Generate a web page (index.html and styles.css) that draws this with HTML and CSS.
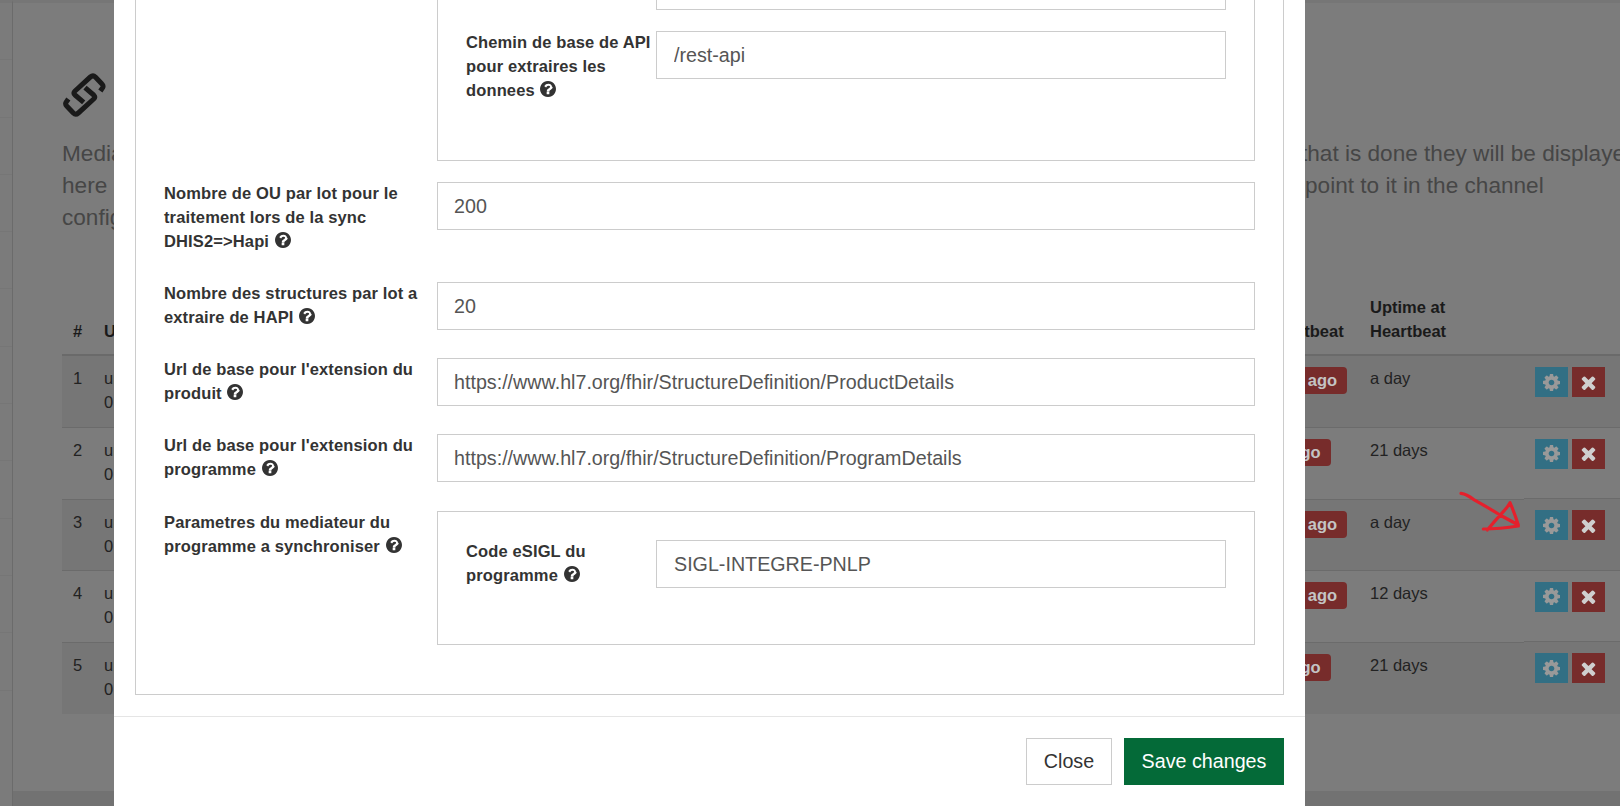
FILE: index.html
```html
<!DOCTYPE html>
<html lang="en">
<head>
<meta charset="utf-8">
<title>Mediators</title>
<link rel="stylesheet" href="styles.css">
</head>
<body>
<svg class="defs" width="0" height="0" aria-hidden="true">
  <symbol id="q" viewBox="128 128 1536 1536"><path d="M1024 1376v-192q0-14-9-23t-23-9h-192q-14 0-23 9t-9 23v192q0 14 9 23t23 9h192q14 0 23-9t9-23zm256-672q0-88-55.5-163t-138.5-116-170-41q-243 0-371 213-15 24 8 42l132 100q7 6 19 6 16 0 25-19 66-85 107-115 42-29 106-29 59 0 105 32t46 72q0 46-24 74t-82 54q-76 34-139.5 104.5t-63.5 151.5v36q0 14 9 23t23 9h192q14 0 23-9t9-23q0-23 26-59.5t66-63.5q39-22 59-34.5t54-41 52-56 33-70.5 15-96zm384 192q0 209-103 385.5t-279.5 279.5-385.5 103-385.5-103-279.5-279.5-103-385.5 103-385.5 279.5-279.5 385.5-103 385.5 103 279.5 279.5 103 385.5z"/></symbol>
  <symbol id="cog" viewBox="128 128 1536 1536"><path d="M1152 896q0-106-75-181t-181-75-181 75-75 181 75 181 181 75 181-75 75-181zm512-109v222q0 12-8 23t-20 13l-185 28q-19 54-39 91 35 50 107 138 10 12 10 25t-9 23q-27 37-99 108t-94 71q-12 0-26-9l-138-108q-44 23-91 38-16 136-29 186-7 28-36 28h-222q-14 0-24.5-8.5t-11.5-21.5l-28-184q-49-16-90-37l-141 107q-10 9-25 9-14 0-25-11-126-114-165-168-7-10-7-23 0-12 8-23 15-21 51-66.5t54-70.5q-27-50-41-99l-183-27q-13-2-21-12.5t-8-23.5v-222q0-12 8-23t19-13l186-28q14-46 39-92-40-57-107-138-10-12-10-24 0-10 9-23 26-36 98.5-107.5t94.5-71.5q13 0 26 10l138 107q44-23 91-38 16-136 29-186 7-28 36-28h222q14 0 24.5 8.5t11.5 21.5l28 184q49 16 90 37l142-107q9-9 24-9 13 0 25 10 129 119 165 170 7 8 7 22 0 12-8 23-15 21-51 66.5t-54 70.5q26 50 41 98l183 28q13 2 21 12.5t8 23.5z"/></symbol>
  <symbol id="x" viewBox="240 240 1312 1312"><path d="M1490 1322q0 40-28 68l-136 136q-28 28-68 28t-68-28l-294-294-294 294q-28 28-68 28t-68-28l-136-136q-28-28-28-68t28-68l294-294-294-294q-28-28-28-68t28-68l136-136q28-28 68-28t68 28l294 294 294-294q28-28 68-28t68 28l136 136q28 28 28 68t-28 68l-294 294 294 294q28 28 28 68z"/></symbol>
</svg>

<div class="app">
  <nav class="sidebar">
    <div class="nav-item"></div><div class="nav-item"></div><div class="nav-item"></div><div class="nav-item"></div><div class="nav-item"></div><div class="nav-item"></div><div class="nav-item"></div><div class="nav-item"></div><div class="nav-item"></div><div class="nav-item"></div><div class="nav-item"></div><div class="nav-item"></div>
  </nav>
  <main class="content">
    <div class="card">
      <h1 class="title">
        <svg class="link-icon" viewBox="36 18 128 144" aria-hidden="true"><path d="M148 78 L155 68 Q158 62 153 57 L133 36 Q126 29 118 36 L72 78 Q66 84 72 90 L98 112"/><path d="M52 102 L45 112 Q42 118 47 123 L67 144 Q74 151 82 144 L128 102 Q134 96 128 90 L102 68"/></svg>
        <span>Mediators</span>
      </h1>
      <div class="lead">
        <div class="lead-line"><span>Mediators are add-on services that run separately from the OpenHIM. They must register themselves with the core and once </span><span>that is done they will be displayed</span></div>
        <div class="lead-line"><span>here and can be configured. To use a mediator, add a route to a channel and make sure it is reachable, then </span><span class="nudge">point to it in the channel</span></div>
        <div class="lead-line"><span>configuration.</span></div>
      </div>
      <table class="grid">
        <colgroup><col class="c-num"><col class="c-urn"><col class="c-beat"><col class="c-up"><col class="c-act"></colgroup>
        <thead>
          <tr><th>#</th><th>URN</th><th>Last Heartbeat</th><th>Uptime at<br>Heartbeat</th><th></th></tr>
        </thead>
        <tbody>
          <tr><td>1</td><td>urn:mediator:esigl-hapi<br>0.1.0</td><td><span class="badge">a month ago</span></td><td>a day</td><td class="acts"><span class="btn-i info"><svg><use href="#cog"/></svg></span><span class="btn-i danger"><svg class="sx"><use href="#x"/></svg></span></td></tr>
          <tr><td>2</td><td>urn:mediator:dhis2-hapi<br>0.1.0</td><td><span class="badge">a year ago</span></td><td>21 days</td><td class="acts"><span class="btn-i info"><svg><use href="#cog"/></svg></span><span class="btn-i danger"><svg class="sx"><use href="#x"/></svg></span></td></tr>
          <tr><td>3</td><td>urn:mediator:sync-programs<br>0.1.0</td><td><span class="badge">a month ago</span></td><td>a day</td><td class="acts"><span class="btn-i info"><svg><use href="#cog"/></svg></span><span class="btn-i danger"><svg class="sx"><use href="#x"/></svg></span></td></tr>
          <tr><td>4</td><td>urn:mediator:sync-products<br>0.1.0</td><td><span class="badge">a month ago</span></td><td>12 days</td><td class="acts"><span class="btn-i info"><svg><use href="#cog"/></svg></span><span class="btn-i danger"><svg class="sx"><use href="#x"/></svg></span></td></tr>
          <tr><td>5</td><td>urn:mediator:sync-orgunits<br>0.1.0</td><td><span class="badge">a year ago</span></td><td>21 days</td><td class="acts"><span class="btn-i info"><svg><use href="#cog"/></svg></span><span class="btn-i danger"><svg class="sx"><use href="#x"/></svg></span></td></tr>
        </tbody>
      </table>
    </div>
    <div class="page-foot"></div>
  </main>
</div>

<svg class="scribble" viewBox="0 0 240 180" aria-hidden="true"><path d="M33 40 Q50 42 70 58 Q110 80 150 105 L205 135 Q192 95 180 68 Q172 82 160 95 Q135 122 112 150 M100 147 Q150 147 205 138"/></svg>

<div class="modal">
  <div class="modal-body">
    <div class="panel outer">
      <div class="row row-first">
        <div class="lbl"></div>
        <div class="panel inner">
          <div class="row r-inner row-first"><div class="lbl">Adresse</div><input class="field" value="localhost"></div>
          <div class="row r-inner"><label class="lbl">Chemin de base de API pour extraires les donnees <svg class="help"><use href="#q"/></svg></label><input class="field" value="/rest-api"></div>
          <div class="pad-3l"></div>
        </div>
      </div>
      <div class="row"><label class="lbl">Nombre de OU par lot pour le traitement lors de la sync DHIS2=&gt;Hapi <svg class="help"><use href="#q"/></svg></label><input class="field" value="200"></div>
      <div class="row"><label class="lbl">Nombre des structures par lot a extraire de HAPI <svg class="help"><use href="#q"/></svg></label><input class="field" value="20"></div>
      <div class="row"><label class="lbl">Url de base pour l'extension du produit <svg class="help"><use href="#q"/></svg></label><input class="field" value="https://www.hl7.org/fhir/StructureDefinition/ProductDetails"></div>
      <div class="row row-wide"><label class="lbl">Url de base pour l'extension du programme <svg class="help"><use href="#q"/></svg></label><input class="field" value="https://www.hl7.org/fhir/StructureDefinition/ProgramDetails"></div>
      <div class="row">
        <label class="lbl">Parametres du mediateur du programme a synchroniser <svg class="help"><use href="#q"/></svg></label>
        <div class="panel inner">
          <div class="row r-inner"><label class="lbl">Code eSIGL du programme <svg class="help"><use href="#q"/></svg></label><input class="field" value="SIGL-INTEGRE-PNLP"></div>
        </div>
      </div>
    </div>
  </div>
  <div class="modal-footer">
    <button class="btn btn-close" type="button">Close</button>
    <button class="btn btn-save" type="button">Save changes</button>
  </div>
</div>
</body>
</html>
```
FILE: styles.css
```css
* { box-sizing: border-box; }
html, body { margin: 0; height: 100%; overflow: hidden; }
body { font-family: "Liberation Sans", Arial, sans-serif; color: #171717; background: #7c7c7c; }
.defs { position: absolute; }

.app { display: flex; height: 806px; width: 1700px; }
.sidebar { width: 13px; flex: none; border-right: 1px solid #6b6b6b; border-top: 3px solid #767676; background: #7b7b7b; }
.nav-item { height: 57.3px; border-bottom: 1px solid #767676; }
.content { flex: 1; display: flex; flex-direction: column; background: #727272; }
.card { height: 791px; padding: 68px 0 0 49px; background: #7c7c7c; border-top: 3px solid #767676; }
.page-foot { flex: 1; }

.title { display: flex; align-items: center; gap: 16px; margin: 0; height: 48px; font-size: 36px; font-weight: 500; color: #1c1c1c; }
.link-icon { width: 42.7px; height: 48px; flex: none; margin-left: 1px; fill: none; stroke: #1a1a1a; stroke-width: 15; stroke-linecap: butt; stroke-linejoin: round; }
.lead { margin-top: 19px; font-size: 22.6px; line-height: 32px; color: #464646; }
.lead-line { display: grid; grid-template-columns: 1239px auto; white-space: nowrap; height: 32px; }
.lead-line span:first-child { overflow: hidden; }
.nudge { padding-left: 4px; }

.grid { margin-top: 61px; table-layout: fixed; width: 1650px; border-collapse: collapse; font-size: 16.5px; line-height: 24px; }
.c-num { width: 31px; }
.c-urn { width: 1125px; }
.c-beat { width: 141px; }
.c-up { width: 165px; }
.c-act { width: 188px; }
.grid th { text-align: left; vertical-align: bottom; font-size: 16.5px; white-space: nowrap; padding: 0 11px 11px; border-bottom: 2px solid #6a6a6a; color: #1a1a1a; }
.grid td { height: 71.6px; vertical-align: top; padding: 10px 11px; border-bottom: 1px solid #6b6b6b; color: #222; white-space: nowrap; }
.grid tbody tr:nth-child(odd) td { background: #767676; }
.grid tbody tr:last-child td { border-bottom: 0; }
.badge { display: inline-block; white-space: nowrap; height: 27px; margin-top: 1px; line-height: 26px; padding: 0 10px; border-radius: 4px; background: #772c2b; color: #c4c4c4; font-size: 16.5px; font-weight: 700; }
.acts { display: flex; gap: 4px; }
.btn-i { width: 33px; height: 30px; margin-top: 1px; display: flex; align-items: center; justify-content: center; fill: #999; }
.btn-i svg { width: 17px; height: 17px; }
.btn-i svg.sx { width: 15px; height: 15px; fill: #cfcfcf; }
.info { background: #326f84; }
.danger { background: #772c2b; }

.scribble { position: absolute; left: 1450px; top: 480px; width: 80px; height: 60px; fill: none; stroke: #e5202c; stroke-width: 9.5; stroke-linecap: round; stroke-linejoin: round; }

.modal { position: absolute; left: 114px; top: 0; width: 1191px; height: 806px; background: #fff; display: flex; flex-direction: column; color: #333; }
.modal-body { flex: 1; min-height: 0; overflow: hidden; display: flex; flex-direction: column; justify-content: flex-end; padding: 0 21px 21px; }
.panel { border: 1px solid #ccc; flex: none; }
.outer { padding: 0 28px; margin: 0; }
.row { display: flex; align-items: flex-start; margin-bottom: 28px; }
.row-first { margin-bottom: 21px; }
.row-wide { margin-bottom: 29px; }
.outer > .row:last-child { margin-bottom: 49px; }
.lbl { flex: none; width: 273px; margin: -1px 0 1px; font-size: 16.5px; font-weight: 700; line-height: 24px; letter-spacing: .13px; color: #333; }
.r-inner .lbl { width: 190px; }
.inner { flex: 1; padding: 28px 28px 0; min-height: 134px; }
.pad-3l { height: 29px; }
.field { flex: 1; min-width: 0; height: 48px; border: 1px solid #ccc; padding: 0 16px; font: 19.7px "Liberation Sans", Arial, sans-serif; color: #555; background: #fff; outline: 0; border-radius: 0; }
.r-inner .field { padding-left: 17px; }
.help { width: 16px; height: 16px; fill: #333; vertical-align: -1px; margin-left: 1px; }

.modal-footer { flex: none; height: 90px; border-top: 1px solid #e5e5e5; padding: 21px 21px 0 0; display: flex; justify-content: flex-end; gap: 12px; align-items: flex-start; }
.btn { height: 47px; border: 1px solid #ccc; font: 19.7px "Liberation Sans", Arial, sans-serif; padding: 0; }
.btn-close { width: 86px; background: #fff; color: #333; }
.btn-save { width: 160px; background: #046a38; border-color: #046a38; color: #fff; }
```
